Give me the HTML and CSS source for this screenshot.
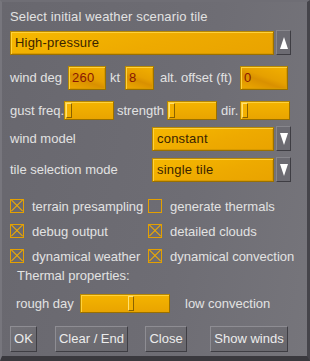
FILE: index.html
```html
<!DOCTYPE html>
<html lang="en">
<head>
  <meta charset="UTF-8">
  <title>Weather scenario</title>
  <link rel="stylesheet" href="styles.css">
</head>
<body>
  <div class="dialog">

    <!-- scenario -->
    <div class="title">Select initial weather scenario tile</div>
    <div class="row combo-row">
      <div class="field combo wide">High-pressure</div>
      <div class="arrow-btn"><span class="tri up"></span></div>
    </div>

    <!-- wind -->
    <div class="row wind-row">
      <span class="lbl w-deg">wind deg</span>
      <div class="field input w-deg-in">260</div>
      <span class="lbl w-kt">kt</span>
      <div class="field input w-kt-in">8</div>
      <span class="lbl w-alt">alt. offset (ft)</span>
      <div class="field input w-alt-in">0</div>
    </div>

    <div class="row gust-row">
      <span class="lbl g-freq">gust freq.</span>
      <div class="slider s-small"><span class="knob"></span></div>
      <span class="lbl g-str">strength</span>
      <div class="slider s-small"><span class="knob"></span></div>
      <span class="lbl g-dir">dir.</span>
      <div class="slider s-small"><span class="knob"></span></div>
    </div>

    <div class="row combo-row model-row">
      <span class="lbl c-lbl">wind model</span>
      <div class="field combo narrow">constant</div>
      <div class="arrow-btn"><span class="tri down"></span></div>
    </div>

    <div class="row combo-row tile-row">
      <span class="lbl c-lbl">tile selection mode</span>
      <div class="field combo narrow">single tile</div>
      <div class="arrow-btn"><span class="tri down"></span></div>
    </div>

    <!-- options -->
    <div class="checks">
      <label class="check"><span class="box on"></span>terrain presampling</label>
      <label class="check"><span class="box"></span>generate thermals</label>
      <label class="check"><span class="box on"></span>debug output</label>
      <label class="check"><span class="box on"></span>detailed clouds</label>
      <label class="check"><span class="box on"></span>dynamical weather</label>
      <label class="check"><span class="box on"></span>dynamical convection</label>
    </div>

    <div class="thermal">Thermal properties:</div>
    <div class="row rough-row">
      <span class="lbl r-lbl">rough day</span>
      <div class="slider s-long"><span class="knob mid"></span></div>
      <span class="lbl r-end">low convection</span>
    </div>

    <!-- buttons -->
    <div class="row buttons">
      <div class="btn b-ok">OK</div>
      <div class="btn b-clear">Clear / End</div>
      <div class="btn b-close">Close</div>
      <div class="btn b-show">Show winds</div>
    </div>

  </div>
</body>
</html>
```

FILE: styles.css
```css
/* ---------- base ---------- */
* {
  box-sizing: border-box;
  margin: 0;
  padding: 0;
}
body {
  background: #2f2f33;
  font-family: "Liberation Sans", Arial, sans-serif;
  font-size: 13px;
  color: #e2e2e2;
}

/* ---------- dialog frame ---------- */
.dialog {
  width: 310px;
  height: 361px;
  padding: 0 0 0 8px;
  background: linear-gradient(100deg, #68676e 0%, #6e6d74 60%, #76757b 100%);
  border-left: 2px solid #77767d;
  border-top: 2px solid #6f6e75;
  border-right: 3px solid #45444a;
  border-bottom: 5px solid #3a393e;
  overflow: hidden;
}

.title {
  margin-top: 8px;
  line-height: 14px;
  height: 14px;
  letter-spacing: 0.15px;
}

.row {
  display: flex;
  align-items: center;
}
.lbl {
  white-space: nowrap;
  line-height: 14px;
}

/* ---------- yellow fields ---------- */
.field {
  height: 24px;
  line-height: 22px;
  border: 1px solid #9a7000;
  border-top-color: #b88800;
  border-left-color: #b88800;
  box-shadow: inset 1px 1px 0 #ffd23c, inset -1px -1px 0 #d89a00;
  background: linear-gradient(165deg, #f6b800 0%, #eeaa00 55%, #e9a300 100%);
}
.combo {
  color: #3a2400;
  font-size: 13px;
  padding-left: 4px;
  letter-spacing: 0.2px;
}
.input {
  color: #8a1800;
  font-size: 13px;
  padding-left: 3px;
  letter-spacing: 0.3px;
  background: linear-gradient(200deg, #f2b000 0%, #e6a000 45%, #d99000 60%, #eeaa00 100%);
}

.combo-row { margin-top: 6px; }
.wide { width: 264px; }
.narrow { width: 122px; }
.c-lbl { width: 142px; }

.arrow-btn {
  width: 15px;
  height: 25px;
  margin-left: 2px;
  background: #6c6b72;
  border: 1px solid;
  border-color: #87868c #3e3d43 #3e3d43 #87868c;
  display: flex;
  justify-content: center;
  align-items: center;
}
.tri {
  width: 0;
  height: 0;
  border-left: 4px solid transparent;
  border-right: 4px solid transparent;
}
.tri.up { border-bottom: 12px solid #ffffff; }
.tri.down { border-top: 12px solid #ffffff; }

/* ---------- wind rows ---------- */
.wind-row { margin-top: 11px; }
.w-deg { width: 58px; }
.w-deg-in { width: 38px; }
.w-kt { width: 19px; padding-left: 4px; }
.w-kt-in { width: 29px; }
.w-alt { width: 86px; padding-left: 6px; }
.w-alt-in { width: 48px; }

.gust-row { margin-top: 11px; }
.g-freq { width: 54px; }
.g-str { width: 53px; padding-left: 3px; }
.g-dir { width: 23px; padding-left: 4px; }

/* ---------- sliders ---------- */
.slider {
  position: relative;
  height: 19px;
  border: 1px solid #9a7000;
  border-top-color: #b88800;
  border-left-color: #b88800;
  box-shadow: inset 1px 1px 0 #ffd23c;
  background: linear-gradient(180deg, #f4b400 0%, #e9a400 100%);
}
.s-small { width: 50px; }
.s-long { width: 90px; }
.knob {
  position: absolute;
  top: 1px;
  left: 1px;
  width: 6px;
  height: 15px;
  background: #f3b000;
  border-left: 1px solid #ffe070;
  border-top: 1px solid #ffe070;
  border-right: 1px solid #8a6200;
  border-bottom: 1px solid #8a6200;
}
.knob.mid { left: 47px; }

.model-row { margin-top: 6px; }
.tile-row { margin-top: 6px; }

/* ---------- checkboxes ---------- */
.checks {
  margin-top: 17px;
  display: grid;
  grid-template-columns: 138px 140px;
  row-gap: 11px;
}
.check {
  display: flex;
  align-items: center;
  height: 14px;
  white-space: nowrap;
}
.box {
  position: relative;
  width: 14px;
  height: 14px;
  margin-right: 8px;
  border: 1px solid #e4a000;
  flex: none;
}
.box.on::before,
.box.on::after {
  content: "";
  position: absolute;
  left: -2px;
  top: 5px;
  width: 16px;
  height: 1px;
  background: #f0ac00;
}
.box.on::before { transform: rotate(45deg); }
.box.on::after { transform: rotate(-45deg); }

.thermal {
  margin-top: 6px;
  padding-left: 7px;
  line-height: 14px;
}

.rough-row { margin-top: 11px; }
.r-lbl { width: 70px; padding-left: 6px; }
.r-end { padding-left: 15px; }

/* ---------- buttons ---------- */
.buttons { margin-top: 13px; }
.btn {
  height: 26px;
  line-height: 24px;
  text-align: center;
  color: #ececec;
  background: linear-gradient(160deg, #727177, #68676d);
  border: 1px solid;
  border-color: #8e8d93 #3f3e44 #3f3e44 #8e8d93;
  white-space: nowrap;
}
.b-ok { width: 27px; }
.b-clear { width: 73px; margin-left: 18px; }
.b-close { width: 42px; margin-left: 17px; }
.b-show { width: 78px; margin-left: 23px; }
```
